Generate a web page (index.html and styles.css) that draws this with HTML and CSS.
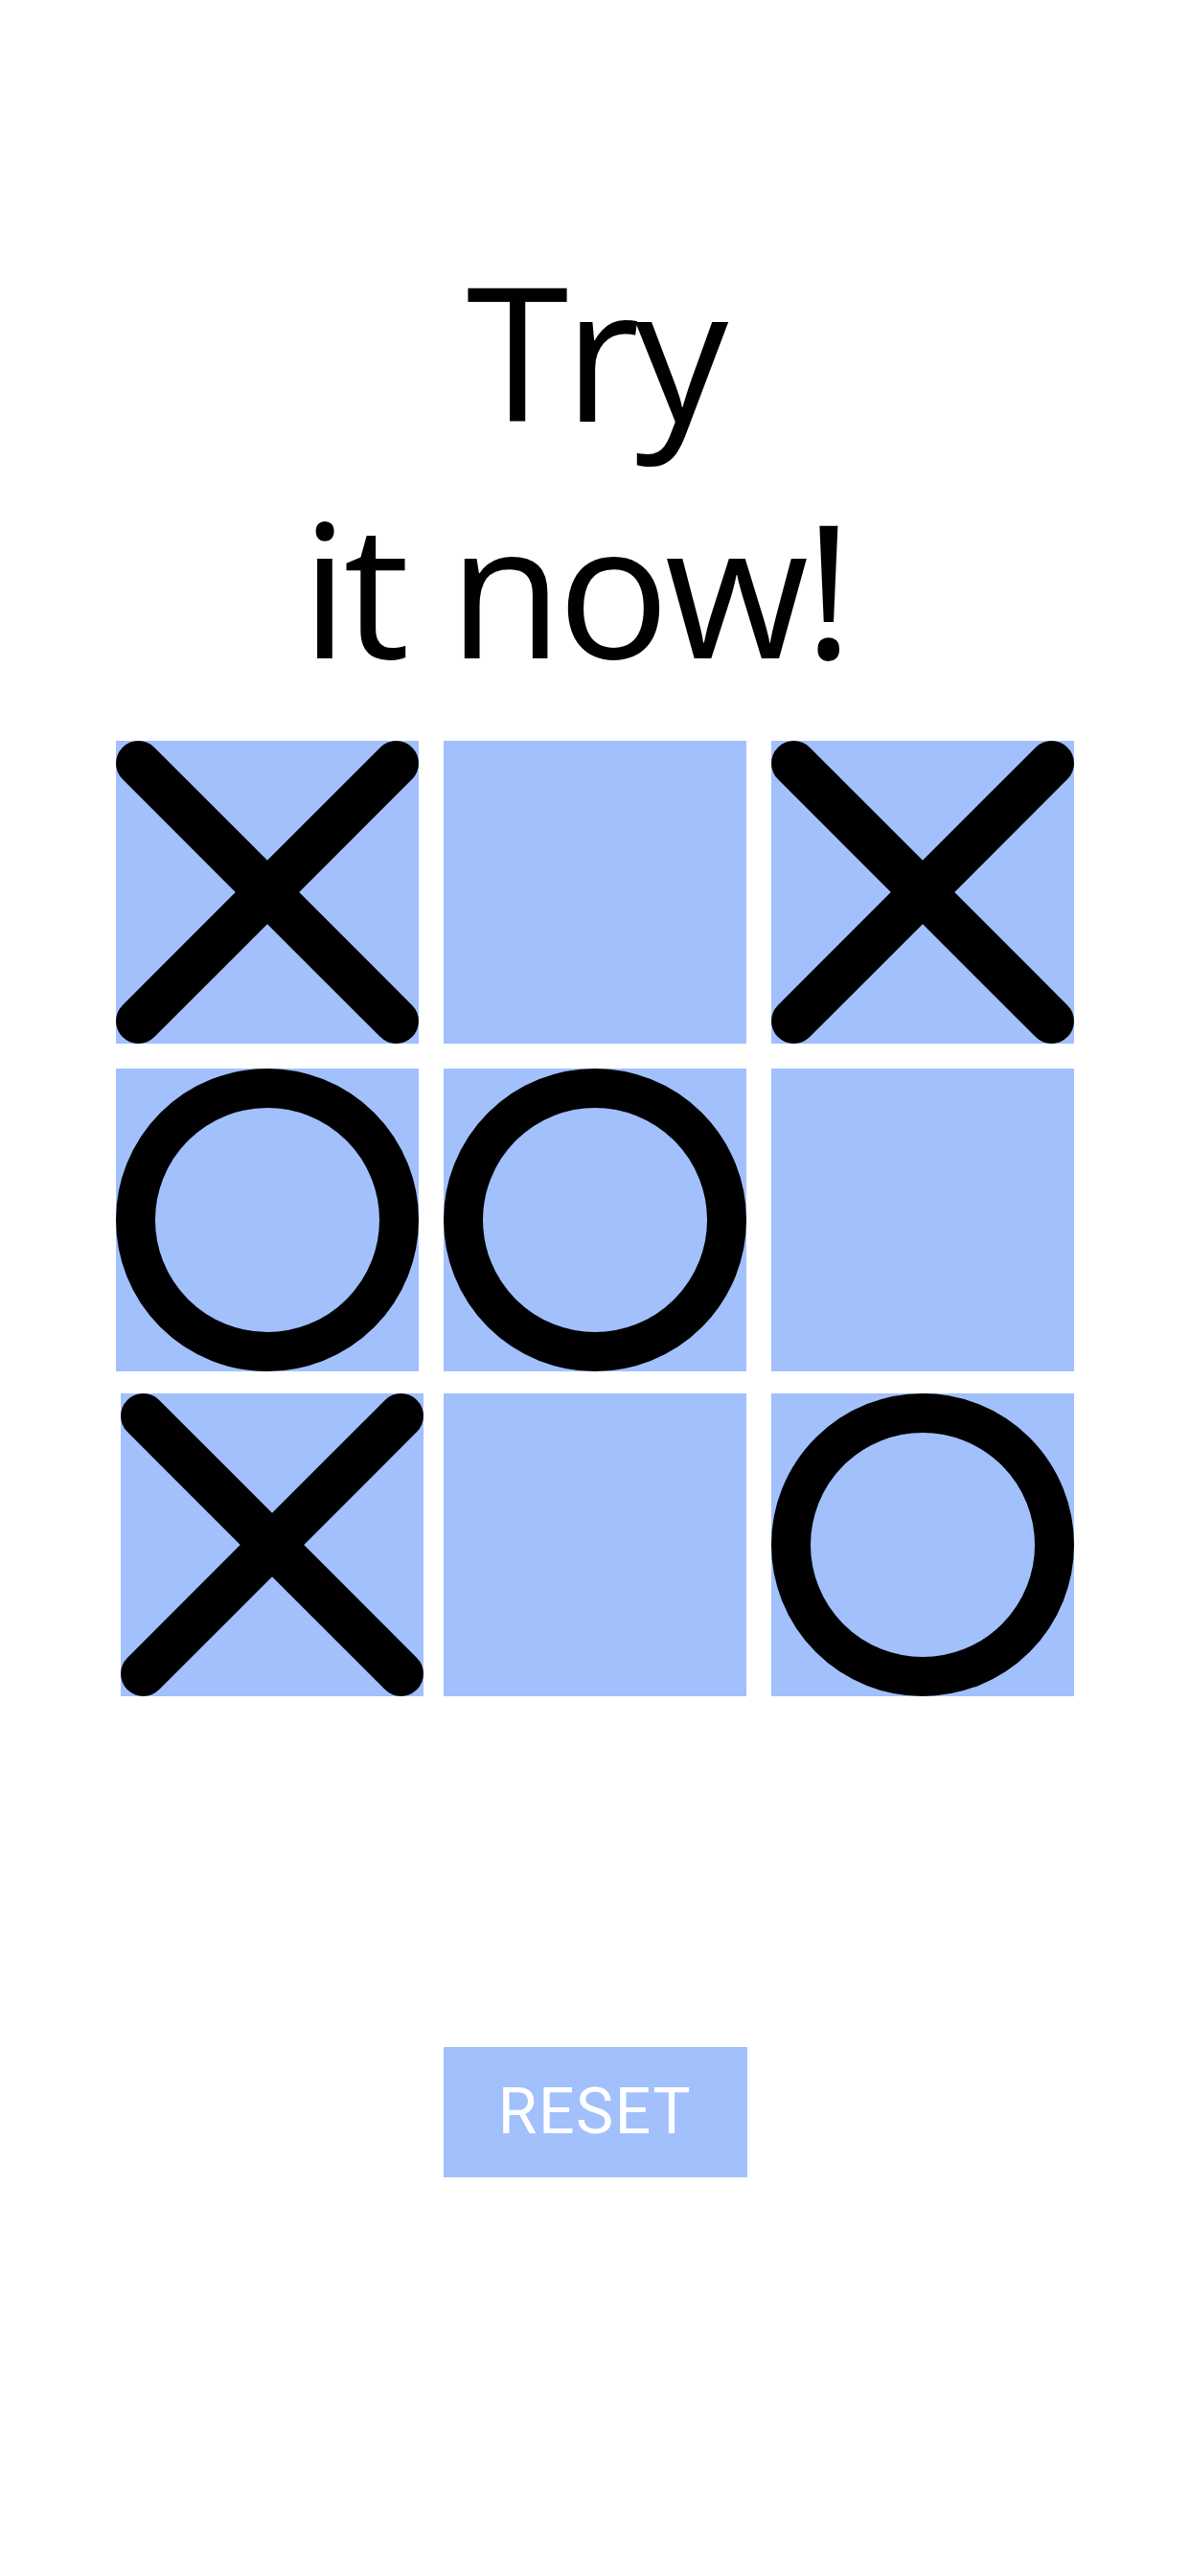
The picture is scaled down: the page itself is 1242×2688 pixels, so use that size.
FILE: index.html
```html
<!DOCTYPE html>
<html lang="en">
<head>
<meta charset="utf-8">
<title>Tic Tac Toe</title>
<link rel="stylesheet" href="styles.css">
</head>
<body>
<main class="screen">
  <h1 class="title"><span class="line1">Try</span><span class="line2">it now!</span></h1>

  <div class="board">
    <div class="row">
      <div class="cell"><svg class="mark" viewBox="0 0 316 316"><line x1="23.5" y1="23.5" x2="292.5" y2="292.5"/><line x1="292.5" y1="23.5" x2="23.5" y2="292.5"/></svg></div>
      <div class="cell"></div>
      <div class="cell"><svg class="mark" viewBox="0 0 316 316"><line x1="23.5" y1="23.5" x2="292.5" y2="292.5"/><line x1="292.5" y1="23.5" x2="23.5" y2="292.5"/></svg></div>
    </div>
    <div class="row">
      <div class="cell"><svg class="mark o" viewBox="0 0 316 316"><circle cx="158" cy="158" r="137.5"/></svg></div>
      <div class="cell"><svg class="mark o" viewBox="0 0 316 316"><circle cx="158" cy="158" r="137.5"/></svg></div>
      <div class="cell"></div>
    </div>
    <div class="row row-last">
      <div class="cell cell-shift"><svg class="mark" viewBox="0 0 316 316"><line x1="23.5" y1="23.5" x2="292.5" y2="292.5"/><line x1="292.5" y1="23.5" x2="23.5" y2="292.5"/></svg></div>
      <div class="cell"></div>
      <div class="cell"><svg class="mark o" viewBox="0 0 316 316"><circle cx="158" cy="158" r="137.5"/></svg></div>
    </div>
  </div>

  <div class="actions">
    <button class="reset" type="button">RESET</button>
  </div>
</main>
</body>
</html>
```

FILE: styles.css
```css
html, body {
  margin: 0;
  padding: 0;
  background: #ffffff;
}

.screen {
  width: 1242px;
  height: 2688px;
  display: flex;
  flex-direction: column;
  align-items: center;
  overflow: hidden;
}

.title {
  margin: 242px 0 0 0;
  font-family: "Open Sans", "Noto Sans", sans-serif;
  font-weight: 400;
  font-size: 194px;
  line-height: 247px;
  letter-spacing: -5px;
  color: #000000;
  text-align: center;
  display: flex;
  flex-direction: column;
  align-items: center;
}

.line1 {
  display: block;
}

.line2 {
  display: block;
  margin-right: 42px;
}

.board {
  margin-top: 37px;
  width: 1000px;
  display: flex;
  flex-direction: column;
  gap: 26px;
}

.row {
  display: grid;
  grid-template-columns: 316px 316px 316px;
  column-gap: 26px;
}

.row-last {
  margin-top: -3px;
}

.cell {
  width: 316px;
  height: 316px;
  background: #a1c0fc;
}

.cell-shift {
  margin-left: 5px;
}

.mark {
  display: block;
  width: 316px;
  height: 316px;
}

.mark line {
  stroke: #000000;
  stroke-width: 47;
  stroke-linecap: round;
}

.mark.o circle {
  fill: none;
  stroke: #000000;
  stroke-width: 41;
}

.actions {
  margin-top: 366px;
  display: flex;
  justify-content: center;
}

.reset {
  width: 317px;
  height: 136px;
  margin: 0;
  padding: 0;
  border: none;
  border-radius: 0;
  background: #a1c0fc;
  color: #ffffff;
  font-family: Roboto, "Liberation Sans", sans-serif;
  font-weight: 400;
  font-size: 66px;
  letter-spacing: 1.5px;
  line-height: 136px;
  text-align: center;
}
```
